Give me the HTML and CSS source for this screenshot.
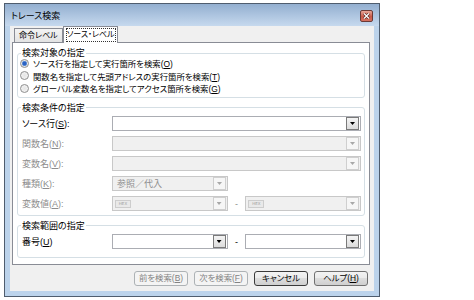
FILE: index.html
```html
<!DOCTYPE html>
<html lang="ja">
  <head>
    <meta charset="UTF-8" />
    <title>トレース検索</title>
    <link rel="stylesheet" href="styles.css">
  </head>
  <body>
    <div class="window">
      <div class="titlebar">
        <span class="title">トレース検索</span>
        <span class="close">
          <svg width="7" height="6" viewBox="0 0 7 6">
            <path d="M1 0.5 L6 5.5 M6 0.5 L1 5.5" stroke="#5a2a24" stroke-width="2.6" />
            <path d="M1 0.5 L6 5.5 M6 0.5 L1 5.5" stroke="#fff" stroke-width="1.3" />
          </svg>
        </span>
      </div>
      <div class="client">
        <div class="tabs">
          <span class="tab">命令レベル</span>
          <span class="tab active"><span class="focus">ソース・レベル</span></span>
        </div>
        <div class="panel">
          <fieldset class="group">
            <legend>検索対象の指定</legend>
            <div class="radios">
              <div class="radio-row"><span class="radio checked"></span><span>ソース行を指定して実行箇所を検索(<u>O</u>)</span></div>
              <div class="radio-row"><span class="radio"></span><span>関数名を指定して先頭アドレスの実行箇所を検索(<u>T</u>)</span></div>
              <div class="radio-row"><span class="radio"></span><span>グローバル変数名を指定してアクセス箇所を検索(<u>G</u>)</span></div>
            </div>
          </fieldset>
          <fieldset class="group">
            <legend>検索条件の指定</legend>
            <div class="fields">
              <div class="field">
                <span class="label">ソース行(<u>S</u>):</span>
                <div class="combo wide"><span class="drop"></span></div>
              </div>
              <div class="field off">
                <span class="label">関数名(<u>N</u>):</span>
                <div class="combo wide"><span class="drop"></span></div>
              </div>
              <div class="field off">
                <span class="label">変数名(<u>V</u>):</span>
                <div class="combo wide"><span class="drop"></span></div>
              </div>
              <div class="field off">
                <span class="label">種類(<u>K</u>):</span>
                <div class="combo"><span class="value">参照／代入</span><span class="drop"></span></div>
              </div>
              <div class="field off">
                <span class="label">変数値(<u>A</u>):</span>
                <div class="combo"><span class="hex">HEX</span><span class="drop"></span></div>
                <span class="dash">-</span>
                <div class="combo"><span class="hex">HEX</span><span class="drop"></span></div>
              </div>
            </div>
          </fieldset>
          <fieldset class="group">
            <legend>検索範囲の指定</legend>
            <div class="fields">
              <div class="field">
                <span class="label">番号(<u>U</u>)</span>
                <div class="combo"><span class="drop"></span></div>
                <span class="dash">-</span>
                <div class="combo"><span class="drop"></span></div>
              </div>
            </div>
          </fieldset>
        </div>
        <div class="buttons">
          <button class="btn" disabled><span>前を検索(<u>B</u>)</span></button>
          <button class="btn" disabled><span>次を検索(<u>F</u>)</span></button>
          <button class="btn default">キャンセル</button>
          <button class="btn"><span>ヘルプ(<u>H</u>)</span></button>
        </div>
      </div>
    </div>
  </body>
</html>
```

FILE: styles.css
```css
body {
  margin: 0;
  background-color: white;
  font-family: "Liberation Sans", "Noto Sans CJK JP", sans-serif;
  font-size: 8px;
  font-feature-settings: "palt";
  color: #000;
}
u {
  text-underline-offset: 1px;
}
.window {
  display: flex;
  flex-direction: column;
  box-sizing: border-box;
  width: 376px;
  height: 294px;
  margin: 3px 0 0 4px;
  border: 1px solid #4f5d6e;
  background-color: #bcd3eb;
}
.titlebar {
  display: flex;
  align-items: center;
  justify-content: space-between;
  height: 22px;
  padding: 2px 6px 0 6px;
  box-sizing: border-box;
  background: linear-gradient(#93afd0, #c6d9ee);
}
.title {
  font-size: 9px;
  line-height: 12px;
  color: #000;
}
.close {
  display: flex;
  align-items: center;
  justify-content: center;
  width: 13px;
  height: 12px;
  box-sizing: border-box;
  border: 1px solid #6b3a36;
  border-radius: 2px;
  background: linear-gradient(#e8a698, #c85a4a 55%, #d5705f);
}
.client {
  display: flex;
  flex-direction: column;
  flex: 1;
  margin: 0 5px 5px 5px;
  padding: 0 4px 0 2px;
  background-color: #f0f0f0;
}
.tabs {
  display: flex;
  align-items: flex-end;
  height: 16px;
  padding-left: 2px;
}
.tab {
  display: flex;
  align-items: center;
  box-sizing: border-box;
  height: 14px;
  padding: 0 4px;
  border: 1px solid #898c95;
  border-bottom: none;
  background: linear-gradient(#f3f3f3, #e3e3e3);
  line-height: 10px;
}
.tab.active {
  position: relative;
  z-index: 1;
  height: 17px;
  margin-bottom: -1px;
  padding: 0 1px 1px 2px;
  background: white;
}
.focus {
  border: 1px dotted #333;
  padding: 1px 0;
}
.panel {
  display: flex;
  flex-direction: column;
  padding-bottom: 6px;
  border: 1px solid #898c95;
  background-color: white;
}
.group {
  margin: 5px 4px 0 4px;
  padding: 0 3px 0 4px;
  min-width: 0;
  border: 1px solid #d5dfe5;
  border-radius: 3px;
}
.group:last-child .fields {
  padding-bottom: 5px;
}
legend {
  margin-left: -1px;
  padding: 0 1px;
  font-size: 9px;
  line-height: 10px;
}
.radios {
  margin: -1px 0 0 -2px;
  padding-bottom: 2px;
  font-size: 8.4px;
}
.radio-row {
  display: flex;
  align-items: center;
  gap: 4px;
  height: 12.5px;
}
.radio {
  width: 9px;
  height: 9px;
  box-sizing: border-box;
  border: 1px solid #8f8f8f;
  border-radius: 50%;
  background: radial-gradient(circle, #e6e6e6, #f6f6f6);
}
.radio.checked {
  background: radial-gradient(circle, #2b63c4 0 1.6px, #79a4de 2.4px, #e6e6e6 3px, #f6f6f6);
}
.fields {
  margin-top: 1px;
  padding-bottom: 1px;
  font-size: 9px;
}
.field {
  display: flex;
  align-items: center;
  height: 20px;
}
.label {
  width: 90px;
  flex-shrink: 0;
}
.combo {
  display: flex;
  align-items: center;
  box-sizing: border-box;
  width: 116px;
  height: 15px;
  padding: 0 1px 0 2px;
  border: 1px solid #abadb3;
  background-color: white;
}
.combo.wide {
  flex: 1;
}
.drop {
  display: flex;
  align-items: center;
  justify-content: center;
  box-sizing: border-box;
  width: 13px;
  height: 13px;
  margin-left: auto;
  border: 1px solid #7a7a7a;
  background: linear-gradient(#f4f4f4, #dcdcdc);
}
.drop::after {
  content: "";
  width: 5px;
  height: 3px;
  background-color: #000;
  clip-path: polygon(0 0, 100% 0, 50% 100%);
}
.dash {
  width: 18px;
  text-align: center;
}
.off {
  color: #8d8d8d;
}
.off .combo {
  border-color: #c8c8c8;
  background-color: #f0f0f0;
}
.off .drop {
  border-color: #cfcfcf;
  background: #f6f6f6;
}
.off .drop::after {
  background-color: #a8a8a8;
}
.value {
  padding-left: 2px;
  color: #8d8d8d;
}
.hex {
  display: flex;
  align-items: center;
  justify-content: center;
  width: 16px;
  height: 8px;
  box-sizing: border-box;
  border: 1px solid #cdcdcd;
  background-color: #e9e9e9;
  font-family: "DejaVu Sans", sans-serif;
  font-size: 4px;
  color: #9a9a9a;
}
.buttons {
  display: flex;
  justify-content: flex-end;
  gap: 6px;
  margin-top: 6px;
  padding-right: 2px;
}
.btn {
  display: flex;
  align-items: center;
  justify-content: center;
  box-sizing: border-box;
  width: 54px;
  height: 15px;
  padding: 0;
  border: 1px solid #707070;
  border-radius: 3px;
  background: linear-gradient(#f3f3f3 0, #ebebeb 45%, #dddddd 50%, #cfcfcf 100%);
  font: inherit;
  font-size: 8.4px;
  color: #000;
  line-height: 10px;
}
.btn:disabled {
  border-color: #adb2b5;
  background: #f4f4f4;
  color: #838383;
}
.btn.default {
  border-color: #3a3a3a;
}
```
